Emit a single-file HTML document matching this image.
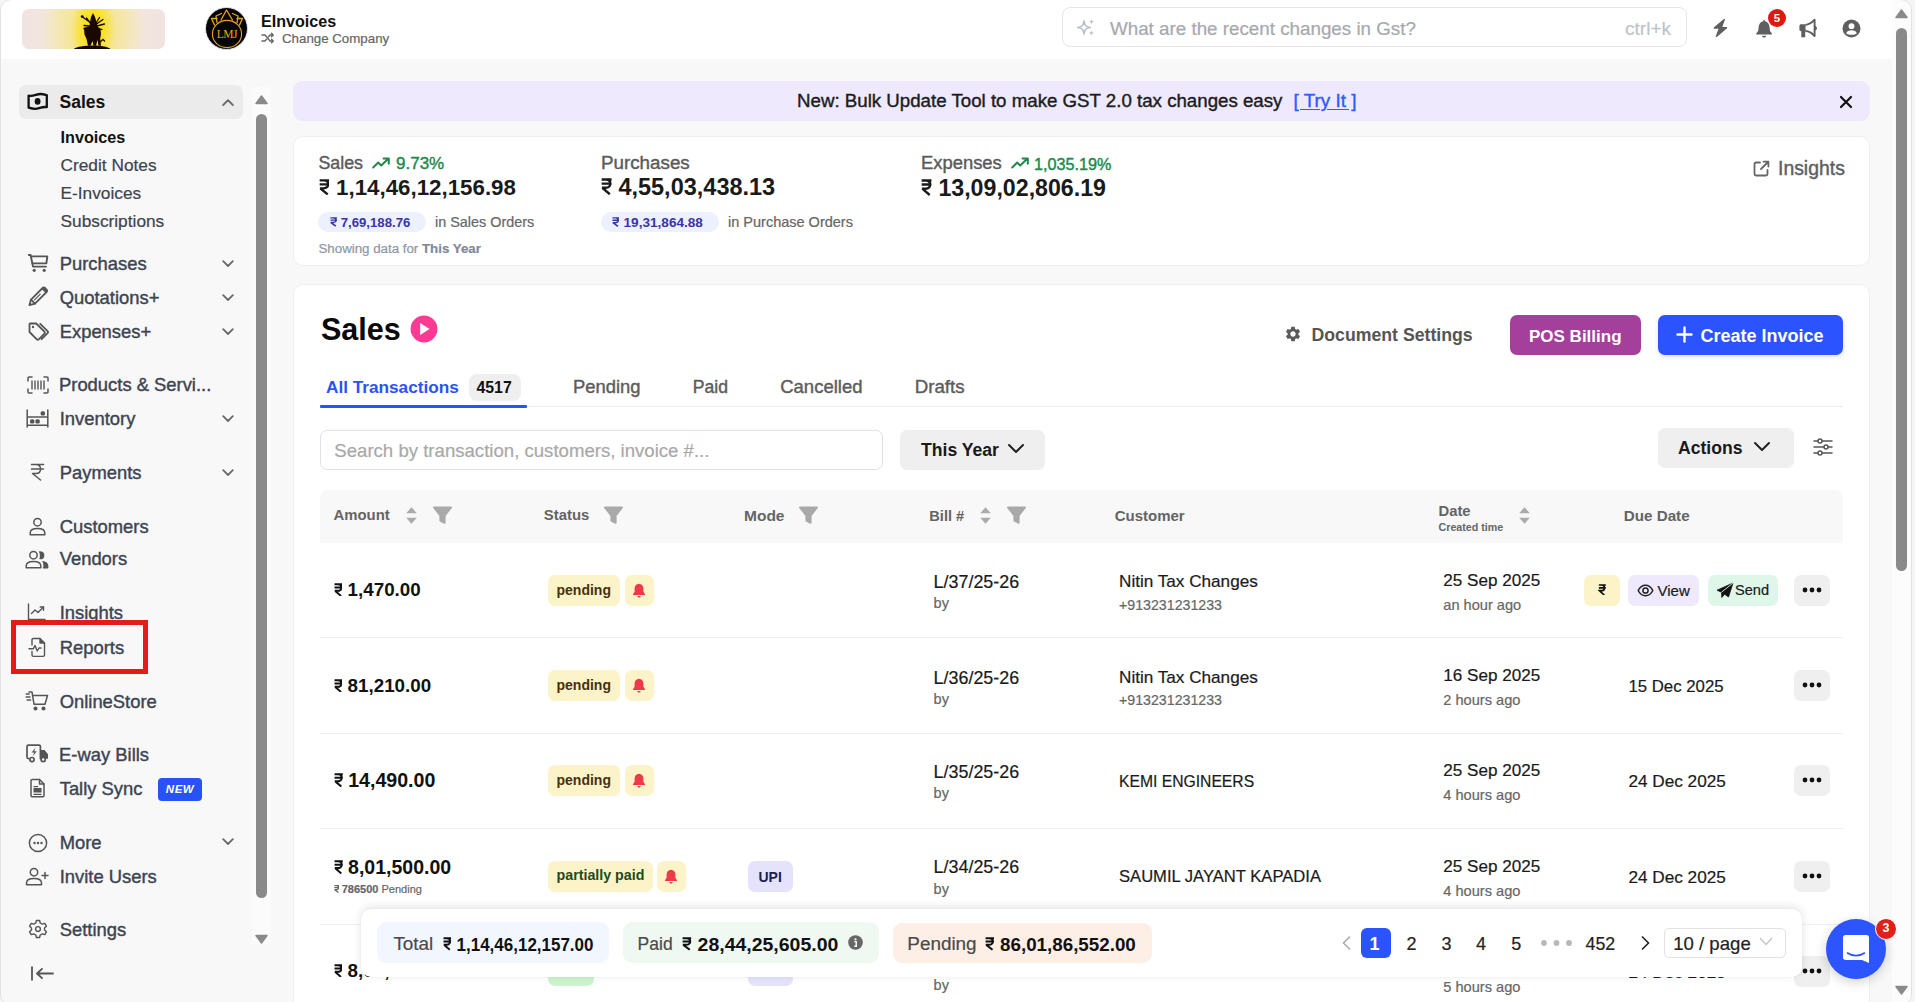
<!DOCTYPE html>
<html><head><meta charset="utf-8"><title>Sales</title>
<style>
*{margin:0;padding:0;box-sizing:border-box}
html,body{width:1915px;height:1002px;overflow:hidden;background:#f4f4f4;font-family:"Liberation Sans",sans-serif}
.a{position:absolute;display:block}
.t{position:absolute;line-height:1;white-space:nowrap}
.rs{display:inline-block;height:0.72em;vertical-align:baseline}
#frame{position:absolute;left:0;top:0;width:1915px;height:1002px;overflow:hidden;background:#f8f8f8}
#bord{position:absolute;left:0;top:-1px;width:1912px;height:1007px;border:1px solid #e2e2e2;border-radius:11px;box-shadow:0 0 0 8px #f5f5f5}
.ic{fill:none;stroke:#555;stroke-width:1.6;stroke-linecap:round;stroke-linejoin:round}
</style></head><body><div id="frame">
<div class="a" style="left:0px;top:0px;width:1915px;height:59px;background:#fff"></div>
<div class="a" style="left:22px;top:9px;width:143px;height:40px;border-radius:7px;overflow:hidden;background:radial-gradient(ellipse 22px 40px at 71px 22px,#f8dc10 0%,#f9e020 40%,rgba(249,226,60,0) 100%),radial-gradient(ellipse 52px 70px at 71px 20px,#f7e460 0%,#f5e69a 45%,rgba(242,232,210,0) 100%),linear-gradient(90deg,#f1e3e1,#f3e8dc 25%,#f3e8dc 75%,#f1e3e1)"></div>
<svg class="a" style="left:60px;top:8px;" width="65" height="41" viewBox="0 0 65 41"><path d="M13.8 41 C17 38.8 24 37.6 33 37.6 C42 37.6 47 38.8 50.5 41Z" fill="#120600"/><path d="M33 5 L35 9 L36.5 14 L38 19 L40.5 21 L41 26 L40.2 31 L41 37.8 L38.5 37.8 L37.5 32 L36 37.8 L33.5 37.8 L32.5 33 L30.5 37.8 L28 37.8 L26.5 31 L24.5 26.5 L24 21 L27 19.5 L29.5 19 L30 14 L31 9 Z" fill="#1a0800"/><g fill="none" stroke="#1a0800" stroke-width="1.3" stroke-linecap="round"><path d="M31 15 L22.5 9 M31 16 L26.5 10 M30.5 18 L24 17.5 M30 19 L24 20.5 M36 15 L39.5 9.5 M36.5 16 L43 11.5 M37 18 L44.5 16 M37 20 L42 21.5 M40 34 L43 31.5 L44.5 33"/></g><circle cx="22.2" cy="8.6" r="1.4" fill="#1a0800"/></svg>
<div class="a" style="left:205px;top:7px;width:43px;height:43px;border-radius:50%;background:#050505;border:1.5px solid #e3e0ec"></div>
<svg class="a" style="left:206px;top:8px;" width="41" height="41" viewBox="0 0 41 41"><ellipse cx="21" cy="26" rx="14.6" ry="13.6" fill="none" stroke="#eaa51c" stroke-width="1.1"/><g fill="none" stroke="#eaa51c" stroke-width="1.3" stroke-linejoin="round" stroke-linecap="round"><path d="M15 12 L20.5 2 L26.5 12"/><path d="M11 14.5 L10 8 L15.5 5.5"/><path d="M31 14.5 L32 8 L26.5 5.5"/><path d="M8.5 17 L5.5 10.5 L11 10.5"/><path d="M33.5 17 L36.5 10.5 L31 10.5"/></g><text x="20.8" y="30.2" text-anchor="middle" font-family="Liberation Serif" font-size="11.5" letter-spacing="-0.6" fill="#eaa51c">LMJ</text></svg>
<div class="t" style="left:261px;top:13.0px;font-size:16.1px;color:#111;font-weight:700;">EInvoices</div>
<svg class="a" style="left:261px;top:32px;" width="14" height="12" viewBox="0 0 14 12"><path d="M1 3H4L9 9H12M1 9H4L5.5 7.2M7.5 4.8L9 3H12M10.5 1.3L12.3 3L10.5 4.7M10.5 7.3L12.3 9L10.5 10.7" fill="none" stroke="#666" stroke-width="1.4" stroke-linecap="round" stroke-linejoin="round"/></svg>
<div class="t" style="left:282px;top:32.1px;font-size:13.3px;color:#666;-webkit-text-stroke:0.2px #666;">Change Company</div>
<div class="a" style="left:1062px;top:7px;width:625px;height:40px;border:1px solid #e6e6ea;border-radius:8px;background:#fff"></div>
<svg class="a" style="left:1074px;top:17px;" width="22" height="22" viewBox="1074 17 22 22"><path d="M1084 21.2 C1084.7 25.6 1085.9 26.8 1090.3 27.5 C1085.9 28.2 1084.7 29.4 1084 33.8 C1083.3 29.4 1082.1 28.2 1077.7 27.5 C1082.1 26.8 1083.3 25.6 1084 21.2Z" fill="none" stroke="#b9bfc8" stroke-width="1.7" stroke-linejoin="round"/><path d="M1091.5 19 C1091.8 20.9 1092.4 21.5 1094.3 21.8 C1092.4 22.1 1091.8 22.7 1091.5 24.6 C1091.2 22.7 1090.6 22.1 1088.7 21.8 C1090.6 21.5 1091.2 20.9 1091.5 19Z" fill="#b9bfc8"/><path d="M1091.5 30.2 C1091.8 32.1 1092.4 32.7 1094.3 33 C1092.4 33.3 1091.8 33.9 1091.5 35.8 C1091.2 33.9 1090.6 33.3 1088.7 33 C1090.6 32.7 1091.2 32.1 1091.5 30.2Z" fill="#b9bfc8"/></svg>
<div class="t" style="left:1110px;top:19.7px;font-size:18.8px;color:#a6a8ad;-webkit-text-stroke:0.2px #a6a8ad;">What are the recent changes in Gst?</div>
<div class="t" style="left:1625px;top:19.0px;font-size:19.1px;color:#bfc3ca;-webkit-text-stroke:0.2px #bfc3ca;">ctrl+k</div>
<svg class="a" style="left:1712px;top:17px;" width="17" height="22" viewBox="1712 17 17 22"><path d="M1724.3 19.5 L1714.2 28.1 H1719.5 L1716.4 36.4 L1726.6 27.7 H1721.3 Z" fill="#5f5f5f" stroke="#5f5f5f" stroke-width="1.3" stroke-linejoin="round"/></svg>
<svg class="a" style="left:1755px;top:18px;" width="18" height="21" viewBox="1755 18 18 21"><path d="M1764.1 19.3 L1765.1 21.3 C1768 22 1769.5 24.6 1769.6 27.6 L1770 31 L1771.9 33.6 V34.5 H1756.3 V33.6 L1758.2 31 L1758.6 27.6 C1758.7 24.6 1760.2 22 1763.1 21.3 Z" fill="#5f5f5f"/><path d="M1762.2 35.7 H1766 C1766 36.9 1765.2 37.6 1764.1 37.6 C1763 37.6 1762.2 36.9 1762.2 35.7Z" fill="#5f5f5f"/></svg>
<div class="a" style="left:1768px;top:9px;width:18px;height:18px;border-radius:50%;background:#e0190f;color:#fff;font-size:11.5px;font-weight:700;text-align:center;line-height:18px">5</div>
<svg class="a" style="left:1798px;top:18px;" width="20" height="21" viewBox="1798 18 20 21"><path d="M1799.4 25.9 C1799.4 24.9 1800.2 24.2 1801.2 24.2 H1805.6 V31.3 H1801.2 C1800.2 31.3 1799.4 30.6 1799.4 29.6 Z" fill="#5f5f5f"/><path d="M1801.3 31 H1805.2 V37.3 H1801.3 Z" fill="#5f5f5f"/><path d="M1805.4 24.9 C1809 24.8 1812 22.6 1814.6 19.7 V36.1 C1812 33 1809 31.1 1805.4 31" fill="none" stroke="#5f5f5f" stroke-width="1.9" stroke-linejoin="round"/><path d="M1815.4 26.3 C1816.8 27 1816.8 29.5 1815.4 30.2 Z" fill="#5f5f5f" stroke="#5f5f5f" stroke-width="1"/></svg>
<svg class="a" style="left:1842px;top:19px;" width="19" height="19" viewBox="0 0 19 19"><circle cx="9.5" cy="9.5" r="9" fill="#5f5f5f"/><circle cx="9.5" cy="7.2" r="2.9" fill="#fff"/><path d="M4.2 14.2 C5 12 7 11.2 9.5 11.2 C12 11.2 14 12 14.8 14.2 C13.6 15.3 11.8 15.8 9.5 15.8 C7.2 15.8 5.4 15.3 4.2 14.2Z" fill="#fff"/></svg>
<div class="a" style="left:1892px;top:0px;width:21px;height:1002px;background:#fcfcfc"></div>
<svg class="a" style="left:1895px;top:9px;" width="13" height="10" viewBox="0 0 13 10"><path d="M6.5 1 L12 8.5 H1 Z" fill="#8a8a8a" stroke="#8a8a8a" stroke-width="1.5" stroke-linejoin="round"/></svg>
<div class="a" style="left:1896px;top:28px;width:11px;height:543px;background:#8a8a8a;border-radius:6px"></div>
<svg class="a" style="left:1895px;top:985px;" width="13" height="10" viewBox="0 0 13 10"><path d="M1 1.5 H12 L6.5 9 Z" fill="#8a8a8a" stroke="#8a8a8a" stroke-width="1.5" stroke-linejoin="round"/></svg>
<div class="a" style="left:19px;top:85px;width:224px;height:34px;background:#ebebeb;border-radius:7px"></div>
<svg class="a" style="left:27px;top:92px;" width="22" height="19" viewBox="0 0 22 19"><path d="M1.6 3.6 C6 4.8 9.5 2 13.5 2 C16 2 18 2.6 19.8 3 V15.2 C15.5 14.2 12 16.8 8 16.8 C5.6 16.8 3.6 16.2 1.6 15.6 Z" fill="none" stroke="#111" stroke-width="2.3" stroke-linejoin="round"/><ellipse cx="10.6" cy="9.4" rx="2.9" ry="3.3" fill="#111"/></svg>
<div class="t" style="left:59.5px;top:93.5px;font-size:17.5px;color:#111;font-weight:700;">Sales</div>
<svg class="a" style="left:222px;top:99px;" width="12" height="7.5" viewBox="0 0 12 7.5"><path d="M1.2 6 L6 1.2 L10.8 6" fill="none" stroke="#6a6a6a" stroke-width="1.8" stroke-linecap="round" stroke-linejoin="round"/></svg>
<div class="t" style="left:60.5px;top:129.1px;font-size:16.2px;color:#111;font-weight:700;">Invoices</div>
<div class="t" style="left:60.5px;top:156.9px;font-size:17.3px;color:#3d4450;-webkit-text-stroke:0.2px #3d4450;">Credit Notes</div>
<div class="t" style="left:60.5px;top:184.8px;font-size:17.3px;color:#3d4450;-webkit-text-stroke:0.2px #3d4450;">E-Invoices</div>
<div class="t" style="left:60.5px;top:212.6px;font-size:17.3px;color:#3d4450;-webkit-text-stroke:0.2px #3d4450;">Subscriptions</div>
<svg class="a" style="left:27px;top:253px;" width="22" height="20" viewBox="27 253 22 20"><g fill="none" stroke="#555" stroke-width="1.9" stroke-linecap="round" stroke-linejoin="round"><path d="M28.8 255 H30.6 L33 266.6 H46"/><path d="M31.2 256.4 H47.3 L46.4 263.4 H32.6"/></g><circle cx="34.2" cy="270.3" r="1.6" fill="#555"/><circle cx="44.2" cy="270.3" r="1.6" fill="#555"/></svg>
<div class="t" style="left:59.7px;top:254.8px;font-size:18.4px;color:#3d4450;-webkit-text-stroke:0.4px #3d4450;">Purchases</div>
<svg class="a" style="left:222px;top:260px;" width="12" height="7.5" viewBox="0 0 12 7.5"><path d="M1.2 1.2 L6 6 L10.8 1.2" fill="none" stroke="#6a6a6a" stroke-width="1.8" stroke-linecap="round" stroke-linejoin="round"/></svg>
<svg class="a" style="left:27px;top:286px;" width="22" height="22" viewBox="27 286 22 22"><g fill="none" stroke="#555" stroke-width="1.8" stroke-linejoin="round" stroke-linecap="round"><path d="M29.4 305.2 L31 299.6 L42.6 288 C43.3 287.3 44.3 287.3 45 288 L46.6 289.6 C47.3 290.3 47.3 291.3 46.6 292 L35 303.6 Z"/><path d="M31 299.6 L35 303.6"/><path d="M34.6 299.8 L40.2 294.2" stroke-width="1.2"/></g><path d="M41.6 289 L42.6 288 C43.3 287.3 44.3 287.3 45 288 L46.6 289.6 C47.3 290.3 47.3 291.3 46.6 292 L45.6 293 Z" fill="#555"/></svg>
<div class="t" style="left:59.7px;top:288.6px;font-size:18.4px;color:#3d4450;-webkit-text-stroke:0.4px #3d4450;">Quotations+</div>
<svg class="a" style="left:222px;top:294px;" width="12" height="7.5" viewBox="0 0 12 7.5"><path d="M1.2 1.2 L6 6 L10.8 1.2" fill="none" stroke="#6a6a6a" stroke-width="1.8" stroke-linecap="round" stroke-linejoin="round"/></svg>
<svg class="a" style="left:27px;top:321px;" width="22" height="21" viewBox="27 321 22 21"><g fill="none" stroke="#555" stroke-width="1.8" stroke-linejoin="round" stroke-linecap="round"><path d="M30.2 323.5 H36.2 L44.4 331.7 C45 332.3 45 333.1 44.4 333.7 L38.8 339.3 C38.2 339.9 37.4 339.9 36.8 339.3 L29.5 332 V324.2 C29.5 323.8 29.8 323.5 30.2 323.5 Z"/><path d="M40.2 323.8 L47.6 331.2 C48.2 331.8 48.2 332.6 47.6 333.2 L41.6 339.2"/></g><circle cx="33" cy="327" r="1.2" fill="#555"/></svg>
<div class="t" style="left:59.7px;top:323.0px;font-size:18.4px;color:#3d4450;-webkit-text-stroke:0.4px #3d4450;">Expenses+</div>
<svg class="a" style="left:222px;top:328px;" width="12" height="7.5" viewBox="0 0 12 7.5"><path d="M1.2 1.2 L6 6 L10.8 1.2" fill="none" stroke="#6a6a6a" stroke-width="1.8" stroke-linecap="round" stroke-linejoin="round"/></svg>
<svg class="a" style="left:27px;top:376px;" width="22" height="18" viewBox="0 0 22 18"><g fill="none" stroke="#555" stroke-width="1.5" stroke-linecap="round" stroke-linejoin="round"><path d="M1 5 V2 C1 1.4 1.4 1 2 1 H5 M17 1 H20 C20.6 1 21 1.4 21 2 V5 M21 13 V16 C21 16.6 20.6 17 20 17 H17 M5 17 H2 C1.4 17 1 16.6 1 16 V13"/><path d="M5 5 V13 M8 5 V13 M11 5 V13 M14 5 V13 M17 5 V13" stroke-width="1.4"/></g></svg>
<div class="t" style="left:59px;top:376.0px;font-size:18.4px;color:#3d4450;-webkit-text-stroke:0.4px #3d4450;">Products &amp; Servi...</div>
<svg class="a" style="left:26px;top:409px;" width="23" height="19" viewBox="0 0 23 19"><g fill="none" stroke="#555" stroke-width="1.5" stroke-linecap="round" stroke-linejoin="round"><path d="M1.2 1 V18 M21.8 1 V18 M1.2 16.2 H21.8 M1.2 8 H21.8"/><rect x="4" y="10.2" width="4.4" height="4.4" rx="1.6" fill="#555" stroke="none"/><rect x="9.4" y="10.2" width="4.4" height="4.4" rx="1.6" fill="#555" stroke="none"/><rect x="14.6" y="2.2" width="4.4" height="4.4" rx="1.6" fill="#555" stroke="none"/></g></svg>
<div class="t" style="left:59.7px;top:409.7px;font-size:18.4px;color:#3d4450;-webkit-text-stroke:0.4px #3d4450;">Inventory</div>
<svg class="a" style="left:222px;top:415px;" width="12" height="7.5" viewBox="0 0 12 7.5"><path d="M1.2 1.2 L6 6 L10.8 1.2" fill="none" stroke="#6a6a6a" stroke-width="1.8" stroke-linecap="round" stroke-linejoin="round"/></svg>
<svg class="a" style="left:30px;top:463px;" width="15" height="18" viewBox="0 0 15 18"><g fill="none" stroke="#555" stroke-width="1.5" stroke-linecap="round" stroke-linejoin="round"><path d="M1.5 1.5 H13.5 M1.5 6 H13.5 M1.5 1.5 H6 C9 1.5 10.5 3.4 10.5 6 C10.5 8.6 8.7 10.5 6 10.5 H2.5 L10.5 17"/></g></svg>
<div class="t" style="left:59.7px;top:463.6px;font-size:18.4px;color:#3d4450;-webkit-text-stroke:0.4px #3d4450;">Payments</div>
<svg class="a" style="left:222px;top:469px;" width="12" height="7.5" viewBox="0 0 12 7.5"><path d="M1.2 1.2 L6 6 L10.8 1.2" fill="none" stroke="#6a6a6a" stroke-width="1.8" stroke-linecap="round" stroke-linejoin="round"/></svg>
<svg class="a" style="left:28px;top:517px;" width="19" height="19" viewBox="0 0 19 19"><g fill="none" stroke="#555" stroke-width="1.5" stroke-linecap="round" stroke-linejoin="round"><circle cx="9.5" cy="5.2" r="3.7"/><path d="M2.2 17.8 V16 C2.2 13 4.6 11.6 9.5 11.6 C14.4 11.6 16.8 13 16.8 16 V17.8 Z"/></g></svg>
<div class="t" style="left:59.7px;top:518.0px;font-size:18.4px;color:#3d4450;-webkit-text-stroke:0.4px #3d4450;">Customers</div>
<svg class="a" style="left:25px;top:550px;" width="24" height="19" viewBox="0 0 24 19"><g fill="none" stroke="#555" stroke-width="1.5" stroke-linecap="round" stroke-linejoin="round"><circle cx="8.5" cy="5.2" r="3.7"/><path d="M1.2 17.8 V16 C1.2 13 3.6 11.6 8.5 11.6 C13.4 11.6 15.8 13 15.8 16 V17.8 Z"/><path d="M14.6 2 C17.5 2 18.6 3.6 18.6 5.4 C18.6 7.2 17.2 8.6 15 8.6" fill="#555"/><path d="M18 11.8 C21 12.4 22.6 13.8 22.6 16 V17.8 H18.5" fill="#555"/></g></svg>
<div class="t" style="left:59.7px;top:550.4px;font-size:18.4px;color:#3d4450;-webkit-text-stroke:0.4px #3d4450;">Vendors</div>
<svg class="a" style="left:27px;top:603px;" width="20" height="18" viewBox="0 0 20 18"><g fill="none" stroke="#555" stroke-width="1.4" stroke-linecap="round" stroke-linejoin="round"><path d="M1.5 1 V16.5 H18"/><path d="M4.5 10.5 L8 7 L11 9.5 L16.5 4"/><path d="M13.2 4 H16.5 V7.2"/></g></svg>
<div class="t" style="left:59.7px;top:604.3px;font-size:18.4px;color:#3d4450;-webkit-text-stroke:0.4px #3d4450;">Insights</div>
<svg class="a" style="left:28px;top:637px;" width="19" height="21" viewBox="0 0 19 21"><g fill="none" stroke="#555" stroke-width="1.4" stroke-linecap="round" stroke-linejoin="round"><path d="M4 8 V2.8 C4 2 4.6 1.5 5.3 1.5 H12 L16.5 6 V18 C16.5 18.8 15.9 19.4 15.1 19.4 H5.3 C4.6 19.4 4 18.8 4 18 V14.5"/><path d="M12 1.5 V6 H16.5" fill="#555"/><path d="M1 11.8 H5.2 L7 8.6 L9.2 14 L11 11 H13"/></g></svg>
<div class="t" style="left:59.7px;top:639.0px;font-size:18.4px;color:#3d4450;-webkit-text-stroke:0.4px #3d4450;">Reports</div>
<div class="a" style="left:11px;top:620px;width:137px;height:54px;border:5px solid #e41b1b"></div>
<svg class="a" style="left:25px;top:691px;" width="24" height="20" viewBox="0 0 24 20"><g fill="none" stroke="#555" stroke-width="1.5" stroke-linecap="round" stroke-linejoin="round"><path d="M1.2 3 H4.2 M1.2 6 H5 M2.2 9 H5.6 M4 1 H7 L9 13.2 H20 L22.5 4.5 H7.5"/><circle cx="10.5" cy="17.5" r="1.3" fill="#555"/><circle cx="18.5" cy="17.5" r="1.3" fill="#555"/></g></svg>
<div class="t" style="left:59.7px;top:692.5px;font-size:18.4px;color:#3d4450;-webkit-text-stroke:0.4px #3d4450;">OnlineStore</div>
<svg class="a" style="left:25px;top:743px;" width="25" height="21" viewBox="25 743 25 21"><g fill="none" stroke="#555" stroke-width="1.7" stroke-linejoin="round" stroke-linecap="round"><path d="M28.6 758.6 C27.6 758.6 27 758 27 757 V746.6 C27 745.8 27.6 745.2 28.4 745.2 H39 C39.8 745.2 40.4 745.8 40.4 746.6 V758.6"/><circle cx="32" cy="759.6" r="2.1"/><circle cx="43.2" cy="759.6" r="2.1"/></g><path d="M40.4 750 H44.5 L48 754.2 V758.8 H45.6 C45 757.6 44.2 757 43.2 757 C42.2 757 41.2 757.6 40.8 758.8 H40.4 Z" fill="#555"/><path d="M35.6 747.6 L31.6 752.6 H34.2 L32.6 756.4 L36.8 751.2 H34.2 Z" fill="#555"/></svg>
<div class="t" style="left:59.1px;top:746.0px;font-size:18.4px;color:#3d4450;-webkit-text-stroke:0.4px #3d4450;">E-way Bills</div>
<svg class="a" style="left:29px;top:778px;" width="17" height="20" viewBox="0 0 17 20"><g fill="none" stroke="#555" stroke-width="1.5" stroke-linecap="round" stroke-linejoin="round"><path d="M2 2.6 C2 2 2.5 1.5 3.1 1.5 H10.5 L15 6 V17.6 C15 18.2 14.5 18.7 13.9 18.7 H3.1 C2.5 18.7 2 18.2 2 17.6 Z"/><path d="M10.5 1.5 V6 H15"/></g></svg>
<svg class="a" style="left:33px;top:786px;" width="10" height="9" viewBox="0 0 10 9"><rect x="0.5" y="2" width="8" height="4.5" fill="#555"/><path d="M0.5 0.6 H5 M0.5 8.3 H8.5" stroke="#555" stroke-width="1.2"/></svg>
<div class="t" style="left:59.7px;top:780.0px;font-size:18.4px;color:#3d4450;-webkit-text-stroke:0.4px #3d4450;">Tally Sync</div>
<div class="a" style="left:158px;top:778px;width:44px;height:23px;border-radius:4px;background:#2752f5;color:#fff;font-size:11.5px;font-weight:700;font-style:italic;text-align:center;line-height:23px;letter-spacing:0.5px">NEW</div>
<svg class="a" style="left:28px;top:833px;" width="20" height="20" viewBox="0 0 20 20"><g fill="none" stroke="#555" stroke-width="1.5" stroke-linecap="round" stroke-linejoin="round"><circle cx="10" cy="10" r="8.6"/><circle cx="6.5" cy="10" r="0.5" fill="#555"/><circle cx="10" cy="10" r="0.5" fill="#555"/><circle cx="13.5" cy="10" r="0.5" fill="#555"/></g></svg>
<div class="t" style="left:59.7px;top:833.5px;font-size:18.4px;color:#3d4450;-webkit-text-stroke:0.4px #3d4450;">More</div>
<svg class="a" style="left:222px;top:838px;" width="12" height="7.5" viewBox="0 0 12 7.5"><path d="M1.2 1.2 L6 6 L10.8 1.2" fill="none" stroke="#6a6a6a" stroke-width="1.8" stroke-linecap="round" stroke-linejoin="round"/></svg>
<svg class="a" style="left:25px;top:867px;" width="24" height="19" viewBox="0 0 24 19"><g fill="none" stroke="#555" stroke-width="1.5" stroke-linecap="round" stroke-linejoin="round"><circle cx="9" cy="5.2" r="3.7"/><path d="M1.5 17.8 V16 C1.5 13 4 11.6 9 11.6 C14 11.6 16.5 13 16.5 16 V17.8 Z"/><path d="M20 5.5 V11.5 M17 8.5 H23"/></g></svg>
<div class="t" style="left:59.7px;top:868.3px;font-size:18.4px;color:#3d4450;-webkit-text-stroke:0.4px #3d4450;">Invite Users</div>
<svg class="a" style="left:28px;top:919px;" width="20" height="20" viewBox="0 0 20 20"><g fill="none" stroke="#555" stroke-width="1.4" stroke-linecap="round" stroke-linejoin="round"><path d="M8.4 1.5 H11.6 L12.2 4 L14.3 5.2 L16.8 4.4 L18.4 7.2 L16.5 9 V11 L18.4 12.8 L16.8 15.6 L14.3 14.8 L12.2 16 L11.6 18.5 H8.4 L7.8 16 L5.7 14.8 L3.2 15.6 L1.6 12.8 L3.5 11 V9 L1.6 7.2 L3.2 4.4 L5.7 5.2 L7.8 4 Z"/><circle cx="10" cy="10" r="2.4"/></g></svg>
<div class="t" style="left:59.7px;top:921.1px;font-size:18.4px;color:#3d4450;-webkit-text-stroke:0.4px #3d4450;">Settings</div>
<svg class="a" style="left:30px;top:966px;" width="25" height="15" viewBox="0 0 25 15"><g fill="none" stroke="#555" stroke-width="1.8" stroke-linecap="round" stroke-linejoin="round"><path d="M2 1.2 V13.8"/><path d="M23 7.5 H7.5 M12 2.8 L7 7.5 L12 12.2"/></g></svg>
<div class="a" style="left:252px;top:87px;width:19px;height:857px;background:#fbfbfb"></div>
<svg class="a" style="left:255px;top:95px;" width="13" height="10" viewBox="0 0 13 10"><path d="M6.5 1 L12 8.5 H1 Z" fill="#8a8a8a" stroke="#8a8a8a" stroke-width="1.5" stroke-linejoin="round"/></svg>
<div class="a" style="left:256px;top:114px;width:11px;height:784px;background:#8a8a8a;border-radius:6px"></div>
<svg class="a" style="left:255px;top:934px;" width="13" height="10" viewBox="0 0 13 10"><path d="M1 1.5 H12 L6.5 9 Z" fill="#8a8a8a" stroke="#8a8a8a" stroke-width="1.5" stroke-linejoin="round"/></svg>
<div class="a" style="left:293px;top:81px;width:1577px;height:40px;background:#eee9fd;border-radius:9px"></div>
<div class="t" style="left:797px;top:91.8px;font-size:18.7px;color:#1c1c1c;-webkit-text-stroke:0.4px #1c1c1c;">New: Bulk Update Tool to make GST 2.0 tax changes easy</div>
<div class="t" style="left:1293.5px;top:91.6px;font-size:18.9px;color:#2f5bff;-webkit-text-stroke:0.4px #2f5bff;text-decoration:underline;text-underline-offset:2px;">[ Try It ]</div>
<svg class="a" style="left:1839px;top:95px;" width="14" height="14" viewBox="0 0 14 14"><path d="M2 2 L12 12 M12 2 L2 12" stroke="#111" stroke-width="2.2" stroke-linecap="round"/></svg>
<div class="a" style="left:293px;top:136px;width:1577px;height:130px;background:#fff;border-radius:10px;border:1px solid #efeef4"></div>
<div class="t" style="left:318.5px;top:154.5px;font-size:17.8px;color:#5a5a5a;-webkit-text-stroke:0.4px #5a5a5a;">Sales</div>
<svg class="a" style="left:372px;top:157px;" width="19" height="12" viewBox="0 0 19 12"><path d="M1.2 10.5 L6.2 5.5 L9.2 8.5 L16.5 1.5 M11.5 1.5 H16.8 V6.8" fill="none" stroke="#1e8a4c" stroke-width="2" stroke-linecap="round" stroke-linejoin="round"/></svg>
<div class="t" style="left:396px;top:155.2px;font-size:17px;color:#1a8a4a;-webkit-text-stroke:0.4px #1a8a4a;">9.73%</div>
<div class="t" style="left:318.5px;top:177.4px;font-size:22.3px;color:#1a1a1a;font-weight:700;"><svg class="rs" style="width:0.49em;margin-right:0.3em" viewBox="0 0 10 15" preserveAspectRatio="none"><path d="M0.6 1.3H9.6M0.6 5H9.6M4.6 1.3C7.4 1.3 8.4 3 8.4 5C8.4 7.2 6.8 8.7 4.3 8.7H0.8M1.4 8.9L8 14.4" fill="none" stroke="currentColor" stroke-width="2.18" stroke-linejoin="round"/></svg>1,14,46,12,156.98</div>
<div class="a" style="left:318px;top:212px;width:108px;height:20px;background:#edf0fd;border-radius:10px"></div>
<div class="t" style="left:329.5px;top:215.8px;font-size:13.2px;color:#3a35a6;font-weight:700;"><svg class="rs" style="width:0.55em;margin-right:0.3em" viewBox="0 0 10 15" preserveAspectRatio="none"><path d="M0.6 1.3H9.6M0.6 5H9.6M4.6 1.3C7.4 1.3 8.4 3 8.4 5C8.4 7.2 6.8 8.7 4.3 8.7H0.8M1.4 8.9L8 14.4" fill="none" stroke="currentColor" stroke-width="2.18" stroke-linejoin="round"/></svg>7,69,188.76</div>
<div class="t" style="left:435px;top:214.8px;font-size:14.4px;color:#666;-webkit-text-stroke:0.2px #666;">in Sales Orders</div>
<div class="t" style="left:318.5px;top:241.8px;font-size:13.3px;color:#8f96a2;-webkit-text-stroke:0.2px #8f96a2;">Showing data for <b style="color:#7f8794">This Year</b></div>
<div class="t" style="left:601px;top:153.7px;font-size:18.8px;color:#5a5a5a;-webkit-text-stroke:0.4px #5a5a5a;">Purchases</div>
<div class="t" style="left:601px;top:176.4px;font-size:23.5px;color:#1a1a1a;font-weight:700;"><svg class="rs" style="width:0.47em;margin-right:0.27em" viewBox="0 0 10 15" preserveAspectRatio="none"><path d="M0.6 1.3H9.6M0.6 5H9.6M4.6 1.3C7.4 1.3 8.4 3 8.4 5C8.4 7.2 6.8 8.7 4.3 8.7H0.8M1.4 8.9L8 14.4" fill="none" stroke="currentColor" stroke-width="2.18" stroke-linejoin="round"/></svg>4,55,03,438.13</div>
<div class="a" style="left:601px;top:212px;width:118px;height:20px;background:#edf0fd;border-radius:10px"></div>
<div class="t" style="left:612px;top:215.5px;font-size:13.6px;color:#3a35a6;font-weight:700;"><svg class="rs" style="width:0.55em;margin-right:0.3em" viewBox="0 0 10 15" preserveAspectRatio="none"><path d="M0.6 1.3H9.6M0.6 5H9.6M4.6 1.3C7.4 1.3 8.4 3 8.4 5C8.4 7.2 6.8 8.7 4.3 8.7H0.8M1.4 8.9L8 14.4" fill="none" stroke="currentColor" stroke-width="2.18" stroke-linejoin="round"/></svg>19,31,864.88</div>
<div class="t" style="left:728px;top:214.7px;font-size:14.5px;color:#666;-webkit-text-stroke:0.2px #666;">in Purchase Orders</div>
<div class="t" style="left:921px;top:154.0px;font-size:18.4px;color:#5a5a5a;-webkit-text-stroke:0.4px #5a5a5a;">Expenses</div>
<svg class="a" style="left:1011px;top:157px;" width="19" height="12" viewBox="0 0 19 12"><path d="M1.2 10.5 L6.2 5.5 L9.2 8.5 L16.5 1.5 M11.5 1.5 H16.8 V6.8" fill="none" stroke="#1e8a4c" stroke-width="2" stroke-linecap="round" stroke-linejoin="round"/></svg>
<div class="t" style="left:1034px;top:155.9px;font-size:16.2px;color:#1a8a4a;-webkit-text-stroke:0.4px #1a8a4a;">1,035.19%</div>
<div class="t" style="left:921px;top:176.7px;font-size:23.2px;color:#1a1a1a;font-weight:700;"><svg class="rs" style="width:0.47em;margin-right:0.28em" viewBox="0 0 10 15" preserveAspectRatio="none"><path d="M0.6 1.3H9.6M0.6 5H9.6M4.6 1.3C7.4 1.3 8.4 3 8.4 5C8.4 7.2 6.8 8.7 4.3 8.7H0.8M1.4 8.9L8 14.4" fill="none" stroke="currentColor" stroke-width="2.18" stroke-linejoin="round"/></svg>13,09,02,806.19</div>
<svg class="a" style="left:1753px;top:160px;" width="17" height="17" viewBox="0 0 17 17"><path d="M7 2.5 H3 C2.2 2.5 1.5 3.2 1.5 4 V14 C1.5 14.8 2.2 15.5 3 15.5 H13 C13.8 15.5 14.5 14.8 14.5 14 V10" fill="none" stroke="#666" stroke-width="1.8" stroke-linecap="round"/><path d="M8 9 L15 2 M10.5 1.6 H15.4 V6.5" fill="none" stroke="#666" stroke-width="1.8" stroke-linecap="round" stroke-linejoin="round"/></svg>
<div class="t" style="left:1778px;top:158.9px;font-size:19.4px;color:#5e5e5e;-webkit-text-stroke:0.4px #5e5e5e;">Insights</div>
<div class="a" style="left:293px;top:284px;width:1577px;height:760px;background:#fff;border-radius:10px;border:1px solid #efeef4"></div>
<div class="t" style="left:321px;top:314.2px;font-size:30.5px;color:#0a0a0a;font-weight:700;">Sales</div>
<svg class="a" style="left:410px;top:315px;" width="28" height="28" viewBox="0 0 28 28"><circle cx="14" cy="14" r="13.4" fill="#fe3a95"/><path d="M10.2 8 L19.5 14 L10.2 20 Z" fill="#fff"/></svg>
<svg class="a" style="left:1284px;top:325px;" width="18" height="18" viewBox="0 0 24 24"><path fill="#5a5a5a" d="M19.14 12.94c.04-.3.06-.61.06-.94 0-.32-.02-.64-.07-.94l2.03-1.58a.49.49 0 0 0 .12-.61l-1.92-3.32a.49.49 0 0 0-.59-.22l-2.39.96c-.5-.38-1.03-.7-1.62-.94l-.36-2.54a.48.48 0 0 0-.48-.41h-3.84c-.24 0-.43.17-.47.41l-.36 2.54c-.59.24-1.13.57-1.62.94l-2.39-.96a.48.48 0 0 0-.59.22L2.74 8.87c-.12.21-.08.47.12.61l2.03 1.58c-.05.3-.07.62-.07.94s.02.64.07.94l-2.03 1.58a.49.49 0 0 0-.12.61l1.92 3.32c.12.22.37.29.59.22l2.39-.96c.5.38 1.03.7 1.62.94l.36 2.54c.05.24.24.41.48.41h3.84c.24 0 .44-.17.47-.41l.36-2.54c.59-.24 1.13-.56 1.62-.94l2.39.96c.22.08.47 0 .59-.22l1.92-3.32c.12-.22.07-.47-.12-.61l-2.01-1.58zM12 15.6c-1.98 0-3.6-1.62-3.6-3.6s1.62-3.6 3.6-3.6 3.6 1.62 3.6 3.6-1.62 3.6-3.6 3.6z"/></svg>
<div class="t" style="left:1311.5px;top:327.2px;font-size:17.7px;color:#555;font-weight:700;">Document Settings</div>
<div class="a" style="left:1510px;top:315px;width:131px;height:40px;border-radius:7px;background:#a4409b"></div>
<div class="t" style="left:1529px;top:327.8px;font-size:17px;color:#fff;font-weight:700;">POS Billing</div>
<div class="a" style="left:1658px;top:315px;width:185px;height:40px;border-radius:7px;background:#2b53ff;box-shadow:0 2px 4px rgba(43,83,255,0.18)"></div>
<svg class="a" style="left:1676px;top:326px;" width="17" height="17" viewBox="0 0 17 17"><path d="M8.5 1.5 V15.5 M1.5 8.5 H15.5" stroke="#fff" stroke-width="2.4" stroke-linecap="round"/></svg>
<div class="t" style="left:1700.5px;top:327.0px;font-size:18px;color:#fff;font-weight:700;">Create Invoice</div>
<div class="t" style="left:326px;top:379.0px;font-size:17.2px;color:#2a52f5;font-weight:700;">All Transactions</div>
<div class="a" style="left:469px;top:374px;width:52px;height:27px;background:#efefef;border-radius:8px"></div>
<div class="t" style="left:476.5px;top:380.2px;font-size:15.85px;color:#111;font-weight:700;">4517</div>
<div class="a" style="left:320px;top:406px;width:1523px;height:1px;background:#ececec"></div>
<div class="a" style="left:320px;top:405px;width:207px;height:3px;background:#2a52f5;border-radius:1px"></div>
<div class="t" style="left:573px;top:378.0px;font-size:18.4px;color:#5c5c5c;-webkit-text-stroke:0.4px #5c5c5c;">Pending</div>
<div class="t" style="left:692.8px;top:378.7px;font-size:17.6px;color:#5c5c5c;-webkit-text-stroke:0.4px #5c5c5c;">Paid</div>
<div class="t" style="left:780.2px;top:377.9px;font-size:18.5px;color:#5c5c5c;-webkit-text-stroke:0.4px #5c5c5c;">Cancelled</div>
<div class="t" style="left:914.7px;top:377.8px;font-size:18.7px;color:#5c5c5c;-webkit-text-stroke:0.4px #5c5c5c;">Drafts</div>
<div class="a" style="left:320px;top:430px;width:563px;height:40px;border:1px solid #e1e1e1;border-radius:7px;background:#fff"></div>
<div class="t" style="left:334.3px;top:441.9px;font-size:18.6px;color:#a8a8a8;-webkit-text-stroke:0.2px #a8a8a8;">Search by transaction, customers, invoice #...</div>
<div class="a" style="left:900px;top:430px;width:145px;height:40px;background:#efefef;border-radius:7px"></div>
<div class="t" style="left:921px;top:441.7px;font-size:17.6px;color:#1a1a1a;font-weight:700;">This Year</div>
<svg class="a" style="left:1007px;top:443px;" width="18" height="11" viewBox="0 0 18 11"><path d="M2 2 L9 9 L16 2" fill="none" stroke="#222" stroke-width="2" stroke-linecap="round" stroke-linejoin="round"/></svg>
<div class="a" style="left:1658px;top:428px;width:136px;height:40px;background:#efefef;border-radius:7px"></div>
<div class="t" style="left:1678px;top:439.7px;font-size:17.6px;color:#1a1a1a;font-weight:700;">Actions</div>
<svg class="a" style="left:1753px;top:441px;" width="18" height="11" viewBox="0 0 18 11"><path d="M2 2 L9 9 L16 2" fill="none" stroke="#222" stroke-width="2" stroke-linecap="round" stroke-linejoin="round"/></svg>
<svg class="a" style="left:1813px;top:438px;" width="20" height="18" viewBox="0 0 20 18"><g fill="none" stroke="#555" stroke-width="1.5" stroke-linecap="round"><path d="M1 3 H19 M1 9 H19 M1 15 H19"/><circle cx="7" cy="3" r="2" fill="#fff"/><circle cx="13" cy="9" r="2" fill="#fff"/><circle cx="7" cy="15" r="2" fill="#fff"/></g></svg>
<div class="a" style="left:320px;top:490px;width:1523px;height:53px;background:#f8f8f8;border-radius:8px 8px 0 0"></div>
<div class="t" style="left:333.5px;top:508.3px;font-size:14.9px;color:#646464;font-weight:700;">Amount</div>
<svg class="a" style="left:405px;top:506px;" width="13" height="19" viewBox="0 0 13 19"><path d="M6.5 1.2 L11.8 7.2 H1.2Z M1.2 11.8 H11.8 L6.5 17.8Z" fill="#ababab"/></svg>
<svg class="a" style="left:432px;top:506px;" width="21" height="19" viewBox="0 0 21 19"><path d="M2 1.5 H19 L12.6 9.6 V16.8 L8.4 14.6 V9.6 Z" fill="#a9a9a9" stroke="#a9a9a9" stroke-width="2" stroke-linejoin="round"/></svg>
<div class="t" style="left:543.8px;top:508.3px;font-size:14.9px;color:#646464;font-weight:700;">Status</div>
<svg class="a" style="left:603px;top:506px;" width="21" height="19" viewBox="0 0 21 19"><path d="M2 1.5 H19 L12.6 9.6 V16.8 L8.4 14.6 V9.6 Z" fill="#a9a9a9" stroke="#a9a9a9" stroke-width="2" stroke-linejoin="round"/></svg>
<div class="t" style="left:744px;top:507.8px;font-size:15.5px;color:#646464;font-weight:700;">Mode</div>
<svg class="a" style="left:798px;top:506px;" width="21" height="19" viewBox="0 0 21 19"><path d="M2 1.5 H19 L12.6 9.6 V16.8 L8.4 14.6 V9.6 Z" fill="#a9a9a9" stroke="#a9a9a9" stroke-width="2" stroke-linejoin="round"/></svg>
<div class="t" style="left:929.3px;top:508.5px;font-size:14.6px;color:#646464;font-weight:700;">Bill #</div>
<svg class="a" style="left:979px;top:506px;" width="13" height="19" viewBox="0 0 13 19"><path d="M6.5 1.2 L11.8 7.2 H1.2Z M1.2 11.8 H11.8 L6.5 17.8Z" fill="#ababab"/></svg>
<svg class="a" style="left:1006px;top:506px;" width="21" height="19" viewBox="0 0 21 19"><path d="M2 1.5 H19 L12.6 9.6 V16.8 L8.4 14.6 V9.6 Z" fill="#a9a9a9" stroke="#a9a9a9" stroke-width="2" stroke-linejoin="round"/></svg>
<div class="t" style="left:1114.7px;top:508.2px;font-size:15px;color:#646464;font-weight:700;">Customer</div>
<div class="t" style="left:1438.5px;top:503.6px;font-size:14.8px;color:#646464;font-weight:700;">Date</div>
<div class="t" style="left:1438.5px;top:522.1px;font-size:10.7px;color:#666;font-weight:700;">Created time</div>
<svg class="a" style="left:1518px;top:506px;" width="13" height="19" viewBox="0 0 13 19"><path d="M6.5 1.2 L11.8 7.2 H1.2Z M1.2 11.8 H11.8 L6.5 17.8Z" fill="#ababab"/></svg>
<div class="t" style="left:1623.8px;top:508.0px;font-size:15.2px;color:#646464;font-weight:700;">Due Date</div>
<div class="t" style="left:333.5px;top:581.1px;font-size:18.8px;color:#111;font-weight:700;"><svg class="rs" style="width:0.47em;margin-right:0.28em" viewBox="0 0 10 15" preserveAspectRatio="none"><path d="M0.6 1.3H9.6M0.6 5H9.6M4.6 1.3C7.4 1.3 8.4 3 8.4 5C8.4 7.2 6.8 8.7 4.3 8.7H0.8M1.4 8.9L8 14.4" fill="none" stroke="currentColor" stroke-width="2.18" stroke-linejoin="round"/></svg>1,470.00</div>
<div class="a" style="left:548px;top:575px;width:72px;height:31px;background:#fdf3c9;border-radius:7px"></div>
<div class="t" style="left:556.5px;top:583.1px;font-size:14px;color:#45300c;font-weight:700;">pending</div>
<div class="a" style="left:625px;top:575px;width:29px;height:31px;background:#fdf3c9;border-radius:7px"></div>
<svg class="a" style="left:632px;top:583px;" width="14" height="15" viewBox="0 0 14 15"><path d="M7 0.8 C4.2 0.8 2.6 3 2.6 5.6 V8.8 L1 11.2 V12 H13 V11.2 L11.4 8.8 V5.6 C11.4 3 9.8 0.8 7 0.8Z" fill="#f0384b"/><path d="M5.4 13 H8.6 C8.6 14.1 7.8 14.6 7 14.6 C6.2 14.6 5.4 14.1 5.4 13Z" fill="#f0384b"/></svg>
<div class="t" style="left:933.6px;top:574.0px;font-size:17.9px;color:#1a1a1a;-webkit-text-stroke:0.2px #1a1a1a;">L/37/25-26</div>
<div class="t" style="left:933.6px;top:596.4px;font-size:14.5px;color:#666;-webkit-text-stroke:0.2px #666;">by</div>
<div class="t" style="left:1119px;top:573.2px;font-size:17.15px;color:#1a1a1a;-webkit-text-stroke:0.2px #1a1a1a;">Nitin Tax Changes</div>
<div class="t" style="left:1119px;top:597.6px;font-size:14.2px;color:#666;-webkit-text-stroke:0.2px #666;">+913231231233</div>
<div class="t" style="left:1443.3px;top:572.4px;font-size:17.1px;color:#1a1a1a;-webkit-text-stroke:0.2px #1a1a1a;">25 Sep 2025</div>
<div class="t" style="left:1443.3px;top:598.2px;font-size:14.6px;color:#666;-webkit-text-stroke:0.2px #666;">an hour ago</div>
<div class="a" style="left:1794px;top:575px;width:36px;height:31px;background:#efefef;border-radius:7px"></div>
<svg class="a" style="left:1802px;top:587px;" width="20" height="6" viewBox="0 0 20 6"><circle cx="3" cy="3" r="2.4" fill="#111"/><circle cx="10" cy="3" r="2.4" fill="#111"/><circle cx="17" cy="3" r="2.4" fill="#111"/></svg>
<div class="a" style="left:320px;top:637px;width:1523px;height:1px;background:#efeff4"></div>
<div class="t" style="left:333.5px;top:677.2px;font-size:18.8px;color:#111;font-weight:700;"><svg class="rs" style="width:0.47em;margin-right:0.28em" viewBox="0 0 10 15" preserveAspectRatio="none"><path d="M0.6 1.3H9.6M0.6 5H9.6M4.6 1.3C7.4 1.3 8.4 3 8.4 5C8.4 7.2 6.8 8.7 4.3 8.7H0.8M1.4 8.9L8 14.4" fill="none" stroke="currentColor" stroke-width="2.18" stroke-linejoin="round"/></svg>81,210.00</div>
<div class="a" style="left:548px;top:670px;width:72px;height:31px;background:#fdf3c9;border-radius:7px"></div>
<div class="t" style="left:556.5px;top:678.1px;font-size:14px;color:#45300c;font-weight:700;">pending</div>
<div class="a" style="left:625px;top:670px;width:29px;height:31px;background:#fdf3c9;border-radius:7px"></div>
<svg class="a" style="left:632px;top:678px;" width="14" height="15" viewBox="0 0 14 15"><path d="M7 0.8 C4.2 0.8 2.6 3 2.6 5.6 V8.8 L1 11.2 V12 H13 V11.2 L11.4 8.8 V5.6 C11.4 3 9.8 0.8 7 0.8Z" fill="#f0384b"/><path d="M5.4 13 H8.6 C8.6 14.1 7.8 14.6 7 14.6 C6.2 14.6 5.4 14.1 5.4 13Z" fill="#f0384b"/></svg>
<div class="t" style="left:933.6px;top:669.5px;font-size:17.9px;color:#1a1a1a;-webkit-text-stroke:0.2px #1a1a1a;">L/36/25-26</div>
<div class="t" style="left:933.6px;top:691.9px;font-size:14.5px;color:#666;-webkit-text-stroke:0.2px #666;">by</div>
<div class="t" style="left:1119px;top:668.7px;font-size:17.15px;color:#1a1a1a;-webkit-text-stroke:0.2px #1a1a1a;">Nitin Tax Changes</div>
<div class="t" style="left:1119px;top:693.1px;font-size:14.2px;color:#666;-webkit-text-stroke:0.2px #666;">+913231231233</div>
<div class="t" style="left:1443.3px;top:667.4px;font-size:17.1px;color:#1a1a1a;-webkit-text-stroke:0.2px #1a1a1a;">16 Sep 2025</div>
<div class="t" style="left:1443.3px;top:693.2px;font-size:14.6px;color:#666;-webkit-text-stroke:0.2px #666;">2 hours ago</div>
<div class="t" style="left:1628.4px;top:678.6px;font-size:16.8px;color:#1a1a1a;-webkit-text-stroke:0.2px #1a1a1a;">15 Dec 2025</div>
<div class="a" style="left:1794px;top:670px;width:36px;height:31px;background:#efefef;border-radius:7px"></div>
<svg class="a" style="left:1802px;top:682px;" width="20" height="6" viewBox="0 0 20 6"><circle cx="3" cy="3" r="2.4" fill="#111"/><circle cx="10" cy="3" r="2.4" fill="#111"/><circle cx="17" cy="3" r="2.4" fill="#111"/></svg>
<div class="a" style="left:320px;top:733px;width:1523px;height:1px;background:#efeff4"></div>
<div class="t" style="left:333.5px;top:771.1px;font-size:19.6px;color:#111;font-weight:700;"><svg class="rs" style="width:0.47em;margin-right:0.28em" viewBox="0 0 10 15" preserveAspectRatio="none"><path d="M0.6 1.3H9.6M0.6 5H9.6M4.6 1.3C7.4 1.3 8.4 3 8.4 5C8.4 7.2 6.8 8.7 4.3 8.7H0.8M1.4 8.9L8 14.4" fill="none" stroke="currentColor" stroke-width="2.18" stroke-linejoin="round"/></svg>14,490.00</div>
<div class="a" style="left:548px;top:765px;width:72px;height:31px;background:#fdf3c9;border-radius:7px"></div>
<div class="t" style="left:556.5px;top:773.1px;font-size:14px;color:#45300c;font-weight:700;">pending</div>
<div class="a" style="left:625px;top:765px;width:29px;height:31px;background:#fdf3c9;border-radius:7px"></div>
<svg class="a" style="left:632px;top:773px;" width="14" height="15" viewBox="0 0 14 15"><path d="M7 0.8 C4.2 0.8 2.6 3 2.6 5.6 V8.8 L1 11.2 V12 H13 V11.2 L11.4 8.8 V5.6 C11.4 3 9.8 0.8 7 0.8Z" fill="#f0384b"/><path d="M5.4 13 H8.6 C8.6 14.1 7.8 14.6 7 14.6 C6.2 14.6 5.4 14.1 5.4 13Z" fill="#f0384b"/></svg>
<div class="t" style="left:933.6px;top:764.0px;font-size:17.9px;color:#1a1a1a;-webkit-text-stroke:0.2px #1a1a1a;">L/35/25-26</div>
<div class="t" style="left:933.6px;top:786.4px;font-size:14.5px;color:#666;-webkit-text-stroke:0.2px #666;">by</div>
<div class="t" style="left:1119px;top:773.7px;font-size:15.7px;color:#1a1a1a;-webkit-text-stroke:0.2px #1a1a1a;">KEMI ENGINEERS</div>
<div class="t" style="left:1443.3px;top:762.1px;font-size:17.1px;color:#1a1a1a;-webkit-text-stroke:0.2px #1a1a1a;">25 Sep 2025</div>
<div class="t" style="left:1443.3px;top:787.9px;font-size:14.6px;color:#666;-webkit-text-stroke:0.2px #666;">4 hours ago</div>
<div class="t" style="left:1628.4px;top:773.2px;font-size:17.2px;color:#1a1a1a;-webkit-text-stroke:0.2px #1a1a1a;">24 Dec 2025</div>
<div class="a" style="left:1794px;top:765px;width:36px;height:31px;background:#efefef;border-radius:7px"></div>
<svg class="a" style="left:1802px;top:777px;" width="20" height="6" viewBox="0 0 20 6"><circle cx="3" cy="3" r="2.4" fill="#111"/><circle cx="10" cy="3" r="2.4" fill="#111"/><circle cx="17" cy="3" r="2.4" fill="#111"/></svg>
<div class="a" style="left:320px;top:828px;width:1523px;height:1px;background:#efeff4"></div>
<div class="t" style="left:333.5px;top:858.2px;font-size:19.5px;color:#111;font-weight:700;"><svg class="rs" style="width:0.47em;margin-right:0.28em" viewBox="0 0 10 15" preserveAspectRatio="none"><path d="M0.6 1.3H9.6M0.6 5H9.6M4.6 1.3C7.4 1.3 8.4 3 8.4 5C8.4 7.2 6.8 8.7 4.3 8.7H0.8M1.4 8.9L8 14.4" fill="none" stroke="currentColor" stroke-width="2.18" stroke-linejoin="round"/></svg>8,01,500.00</div>
<div class="a" style="left:548px;top:861px;width:105px;height:31px;background:#fdf3c9;border-radius:7px"></div>
<div class="t" style="left:556.5px;top:868.3px;font-size:14.25px;color:#1f4a1f;font-weight:700;">partially paid</div>
<div class="a" style="left:657px;top:861px;width:29px;height:31px;background:#fdf3c9;border-radius:7px"></div>
<svg class="a" style="left:664px;top:869px;" width="14" height="15" viewBox="0 0 14 15"><path d="M7 0.8 C4.2 0.8 2.6 3 2.6 5.6 V8.8 L1 11.2 V12 H13 V11.2 L11.4 8.8 V5.6 C11.4 3 9.8 0.8 7 0.8Z" fill="#f0384b"/><path d="M5.4 13 H8.6 C8.6 14.1 7.8 14.6 7 14.6 C6.2 14.6 5.4 14.1 5.4 13Z" fill="#f0384b"/></svg>
<div class="a" style="left:748px;top:861px;width:45px;height:31px;background:#e4e3fb;border-radius:7px"></div>
<div class="t" style="left:758.5px;top:869.7px;font-size:14px;color:#1d1d55;font-weight:700;">UPI</div>
<div class="t" style="left:333.5px;top:883.9px;font-size:11px;color:#666;-webkit-text-stroke:0.2px #666;"><svg class="rs" style="width:0.5em;margin-right:0.25em" viewBox="0 0 10 15" preserveAspectRatio="none"><path d="M0.6 1.3H9.6M0.6 5H9.6M4.6 1.3C7.4 1.3 8.4 3 8.4 5C8.4 7.2 6.8 8.7 4.3 8.7H0.8M1.4 8.9L8 14.4" fill="none" stroke="currentColor" stroke-width="2.30" stroke-linejoin="round"/></svg><b>786500</b> Pending</div>
<div class="t" style="left:933.6px;top:859.4px;font-size:17.9px;color:#1a1a1a;-webkit-text-stroke:0.2px #1a1a1a;">L/34/25-26</div>
<div class="t" style="left:933.6px;top:881.8px;font-size:14.5px;color:#666;-webkit-text-stroke:0.2px #666;">by</div>
<div class="t" style="left:1119px;top:869.0px;font-size:16.6px;color:#1a1a1a;-webkit-text-stroke:0.2px #1a1a1a;">SAUMIL JAYANT KAPADIA</div>
<div class="t" style="left:1443.3px;top:858.1px;font-size:17.1px;color:#1a1a1a;-webkit-text-stroke:0.2px #1a1a1a;">25 Sep 2025</div>
<div class="t" style="left:1443.3px;top:883.9px;font-size:14.6px;color:#666;-webkit-text-stroke:0.2px #666;">4 hours ago</div>
<div class="t" style="left:1628.4px;top:868.5px;font-size:17.2px;color:#1a1a1a;-webkit-text-stroke:0.2px #1a1a1a;">24 Dec 2025</div>
<div class="a" style="left:1794px;top:861px;width:36px;height:31px;background:#efefef;border-radius:7px"></div>
<svg class="a" style="left:1802px;top:873px;" width="20" height="6" viewBox="0 0 20 6"><circle cx="3" cy="3" r="2.4" fill="#111"/><circle cx="10" cy="3" r="2.4" fill="#111"/><circle cx="17" cy="3" r="2.4" fill="#111"/></svg>
<div class="a" style="left:320px;top:924px;width:1523px;height:1px;background:#efeff4"></div>
<div class="a" style="left:1584px;top:575px;width:36px;height:31px;background:#fdf3c9;border-radius:7px"></div>
<svg class="a" style="left:1597.5px;top:583.5px" width="8.5" height="11.8" viewBox="0 0 10 14" preserveAspectRatio="none"><path d="M1 1.2H9.2M1 4.6H9.2M1 1.2H4.2C6.6 1.2 7.6 2.8 7.6 4.6C7.6 6.6 6.2 7.9 4 7.9H1.6L7.6 13.4" fill="none" stroke="#111" stroke-width="2"/></svg>
<div class="a" style="left:1628px;top:575px;width:71px;height:31px;background:#efe9fd;border-radius:7px"></div>
<svg class="a" style="left:1637px;top:582px;" width="17" height="17" viewBox="0 0 17 17"><path d="M1.2 8.5 C3 4.8 5.6 3.2 8.5 3.2 C11.4 3.2 14 4.8 15.8 8.5 C14 12.2 11.4 13.8 8.5 13.8 C5.6 13.8 3 12.2 1.2 8.5Z" fill="none" stroke="#222" stroke-width="1.5"/><circle cx="8.5" cy="8.5" r="2.6" fill="none" stroke="#222" stroke-width="1.5"/></svg>
<div class="t" style="left:1657.5px;top:582.9px;font-size:15px;color:#1a1a1a;-webkit-text-stroke:0.2px #1a1a1a;">View</div>
<div class="a" style="left:1708px;top:575px;width:70px;height:31px;background:#dff7e9;border-radius:7px"></div>
<svg class="a" style="left:1716px;top:582px;" width="18" height="17" viewBox="0 0 18 17"><path d="M17 1 L1 8.2 L5.5 10.2 L5.8 15.5 L8.6 12.2 L12.5 15 Z" fill="#111" stroke="#111" stroke-width="0.8" stroke-linejoin="round"/><path d="M17 1 L5.5 10.2" stroke="#dff7e9" stroke-width="0.9"/></svg>
<div class="t" style="left:1735px;top:583.2px;font-size:14.6px;color:#1a1a1a;-webkit-text-stroke:0.2px #1a1a1a;">Send</div>
<div class="t" style="left:333.5px;top:962.3px;font-size:18.8px;color:#111;font-weight:700;"><svg class="rs" style="width:0.47em;margin-right:0.28em" viewBox="0 0 10 15" preserveAspectRatio="none"><path d="M0.6 1.3H9.6M0.6 5H9.6M4.6 1.3C7.4 1.3 8.4 3 8.4 5C8.4 7.2 6.8 8.7 4.3 8.7H0.8M1.4 8.9L8 14.4" fill="none" stroke="currentColor" stroke-width="2.18" stroke-linejoin="round"/></svg>8,01,500.00</div>
<div class="a" style="left:548px;top:955px;width:46px;height:31px;background:#cdf3cd;border-radius:7px"></div>
<div class="a" style="left:748px;top:955px;width:45px;height:31px;background:#e4e3fb;border-radius:7px"></div>
<div class="t" style="left:933.6px;top:955.4px;font-size:17.9px;color:#1a1a1a;-webkit-text-stroke:0.2px #1a1a1a;">L/33/25-26</div>
<div class="t" style="left:933.6px;top:978.3px;font-size:14.5px;color:#666;-webkit-text-stroke:0.2px #666;">by</div>
<div class="t" style="left:1443.3px;top:954.4px;font-size:17.1px;color:#1a1a1a;-webkit-text-stroke:0.2px #1a1a1a;">25 Sep 2025</div>
<div class="t" style="left:1443.3px;top:980.2px;font-size:14.6px;color:#666;-webkit-text-stroke:0.2px #666;">5 hours ago</div>
<div class="t" style="left:1628.4px;top:964.0px;font-size:17.2px;color:#1a1a1a;-webkit-text-stroke:0.2px #1a1a1a;">24 Dec 2025</div>
<div class="a" style="left:1794px;top:956px;width:36px;height:31px;background:#efefef;border-radius:7px"></div>
<svg class="a" style="left:1802px;top:968px;" width="20" height="6" viewBox="0 0 20 6"><circle cx="3" cy="3" r="2.4" fill="#111"/><circle cx="10" cy="3" r="2.4" fill="#111"/><circle cx="17" cy="3" r="2.4" fill="#111"/></svg>
<div class="a" style="left:361px;top:909px;width:1441px;height:68px;background:#fff;border-radius:10px;box-shadow:0 -2px 10px rgba(0,0,0,0.11),0 0 2px rgba(0,0,0,0.06)"></div>
<div class="a" style="left:377px;top:922px;width:232px;height:41px;background:#f2f7ff;border-radius:9px"></div>
<div class="t" style="left:393.4px;top:935.2px;font-size:18.9px;color:#4a4a4a;-webkit-text-stroke:0.2px #4a4a4a;">Total</div>
<div class="t" style="left:443px;top:935.5px;font-size:18.6px;color:#111;font-weight:700;transform:scaleX(0.913);transform-origin:0 0"><svg class="rs" style="width:0.5em;margin-right:0.3em" viewBox="0 0 10 15" preserveAspectRatio="none"><path d="M0.6 1.3H9.6M0.6 5H9.6M4.6 1.3C7.4 1.3 8.4 3 8.4 5C8.4 7.2 6.8 8.7 4.3 8.7H0.8M1.4 8.9L8 14.4" fill="none" stroke="currentColor" stroke-width="2.18" stroke-linejoin="round"/></svg>1,14,46,12,157.00</div>
<div class="a" style="left:623px;top:922px;width:256px;height:41px;background:#f0f8f2;border-radius:9px"></div>
<div class="t" style="left:637.6px;top:936.4px;font-size:17.5px;color:#4a4a4a;-webkit-text-stroke:0.2px #4a4a4a;">Paid</div>
<div class="t" style="left:682px;top:935.5px;font-size:18.6px;color:#111;font-weight:700;transform:scaleX(1.047);transform-origin:0 0"><svg class="rs" style="width:0.5em;margin-right:0.3em" viewBox="0 0 10 15" preserveAspectRatio="none"><path d="M0.6 1.3H9.6M0.6 5H9.6M4.6 1.3C7.4 1.3 8.4 3 8.4 5C8.4 7.2 6.8 8.7 4.3 8.7H0.8M1.4 8.9L8 14.4" fill="none" stroke="currentColor" stroke-width="2.18" stroke-linejoin="round"/></svg>28,44,25,605.00</div>
<svg class="a" style="left:848px;top:935px;" width="15" height="15" viewBox="0 0 15 15"><circle cx="7.5" cy="7.5" r="7.3" fill="#666"/><circle cx="7.5" cy="4.3" r="1.1" fill="#fff"/><path d="M6.3 6.6 H8.2 V11.2 M6.3 11.2 H9" stroke="#fff" stroke-width="1.4" fill="none"/></svg>
<div class="a" style="left:892.6px;top:922.5px;width:259px;height:40.5px;background:#fdefe5;border-radius:9px"></div>
<div class="t" style="left:907.3px;top:935.2px;font-size:18.9px;color:#4a4a4a;-webkit-text-stroke:0.2px #4a4a4a;">Pending</div>
<div class="t" style="left:985px;top:935.5px;font-size:18.6px;color:#111;font-weight:700;transform:scaleX(1.01);transform-origin:0 0"><svg class="rs" style="width:0.5em;margin-right:0.3em" viewBox="0 0 10 15" preserveAspectRatio="none"><path d="M0.6 1.3H9.6M0.6 5H9.6M4.6 1.3C7.4 1.3 8.4 3 8.4 5C8.4 7.2 6.8 8.7 4.3 8.7H0.8M1.4 8.9L8 14.4" fill="none" stroke="currentColor" stroke-width="2.18" stroke-linejoin="round"/></svg>86,01,86,552.00</div>
<svg class="a" style="left:1341px;top:935px;" width="11" height="16" viewBox="0 0 11 16"><path d="M9 1.5 L2.5 8 L9 14.5" fill="none" stroke="#aaa" stroke-width="1.5"/></svg>
<div class="a" style="left:1361px;top:928px;width:30px;height:30px;background:#2b53ff;border-radius:6px"></div>
<div class="t" style="left:1369.5px;top:935.4px;font-size:18px;color:#fff;font-weight:700;">1</div>
<div class="t" style="left:1406.5px;top:935.4px;font-size:18px;color:#222;-webkit-text-stroke:0.2px #222;">2</div>
<div class="t" style="left:1441.5px;top:935.4px;font-size:18px;color:#222;-webkit-text-stroke:0.2px #222;">3</div>
<div class="t" style="left:1476px;top:935.4px;font-size:18px;color:#222;-webkit-text-stroke:0.2px #222;">4</div>
<div class="t" style="left:1511.2px;top:935.4px;font-size:18px;color:#222;-webkit-text-stroke:0.2px #222;">5</div>
<svg class="a" style="left:1540px;top:939px;" width="34" height="8" viewBox="0 0 34 8"><circle cx="4" cy="4" r="2.9" fill="#b8b8b8"/><circle cx="16.5" cy="4" r="2.9" fill="#b8b8b8"/><circle cx="29" cy="4" r="2.9" fill="#b8b8b8"/></svg>
<div class="t" style="left:1585.5px;top:935.5px;font-size:17.8px;color:#222;-webkit-text-stroke:0.2px #222;">452</div>
<svg class="a" style="left:1640px;top:935px;" width="11" height="16" viewBox="0 0 11 16"><path d="M2 1.5 L8.5 8 L2 14.5" fill="none" stroke="#222" stroke-width="1.6"/></svg>
<div class="a" style="left:1664px;top:928px;width:122px;height:30px;border:1px solid #e2e2e2;border-radius:5px;background:#fff"></div>
<div class="t" style="left:1673.2px;top:935.4px;font-size:18.6px;color:#222;-webkit-text-stroke:0.2px #222;">10 / page</div>
<svg class="a" style="left:1759px;top:937px;" width="14" height="9" viewBox="0 0 14 9"><path d="M1 1 L7 7.5 L13 1" fill="none" stroke="#c4c4c4" stroke-width="1.3"/></svg>
<div class="a" style="left:1826px;top:919px;width:60px;height:60px;border-radius:50%;background:#2c55ff;box-shadow:0 3px 12px rgba(0,0,0,0.18)"></div>
<svg class="a" style="left:1842px;top:934px;" width="28" height="30" viewBox="0 0 28 30"><path d="M3.5 1 H24.5 C25.9 1 27 2.1 27 3.5 V29 L20 26 H3.5 C2.1 26 1 24.9 1 23.5 V3.5 C1 2.1 2.1 1 3.5 1Z" fill="#fff"/><path d="M5.5 19 C10.5 22.5 17.5 22.5 22.5 19" fill="none" stroke="#2c55ff" stroke-width="1.6" stroke-linecap="round"/></svg>
<div class="a" style="left:1875px;top:918px;width:22px;height:22px;border-radius:50%;background:#e0201b;border:1.5px solid #fff;color:#fff;font-size:12.5px;font-weight:700;text-align:center;line-height:19px">3</div>
<div id="bord"></div></div></body></html>
